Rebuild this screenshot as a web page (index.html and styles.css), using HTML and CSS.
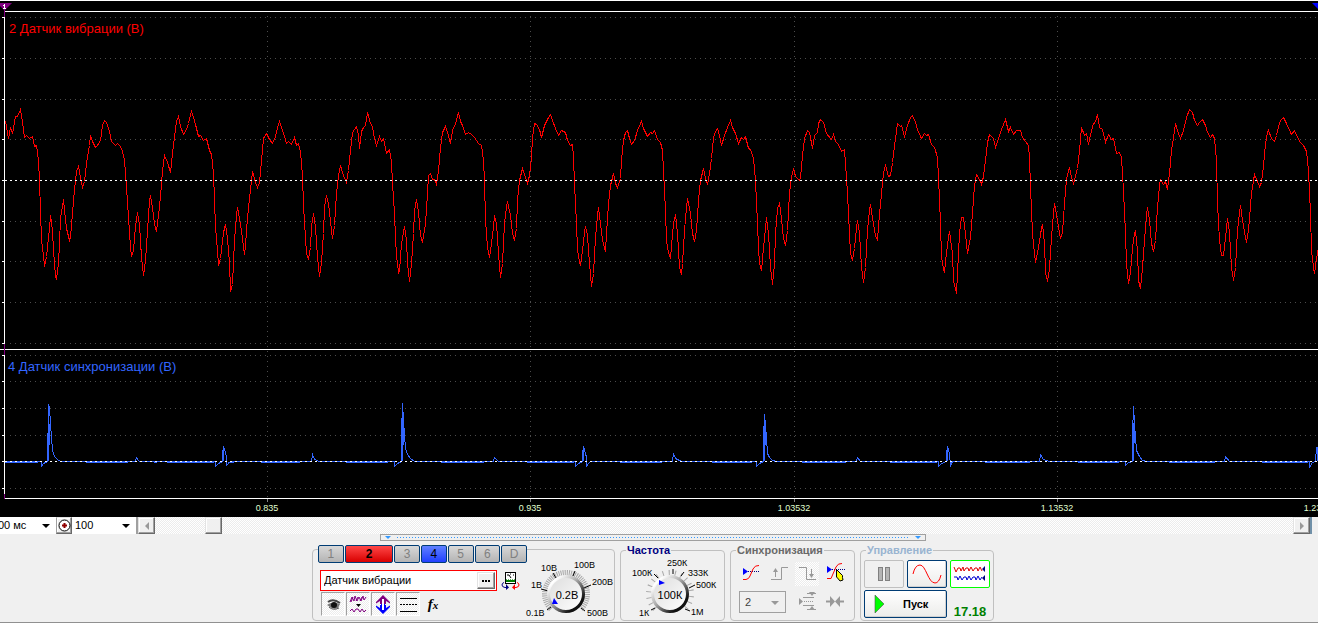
FILE: index.html
```html
<!DOCTYPE html>
<html lang="ru">
<head>
<meta charset="utf-8">
<title>Осциллограф</title>
<link rel="stylesheet" href="styles.css">
</head>
<body>
<main class="scope">
  <svg class="chart" viewBox="0 0 1318 517" role="img" aria-label="Осциллограммы каналов 2 и 4">
    <g class="grid">
      <path d="M10 17.5H1318M10 58.5H1318M10 99.5H1318M10 139.5H1318M10 221.5H1318M10 261.5H1318M10 302.5H1318M10 343.5H1318"/>
      <path d="M10 355.5H1318M10 381.5H1318M10 408.5H1318M10 435.5H1318M10 488.5H1318"/>
      <path d="M267.5 16V348M530.5 16V348M794.5 16V348M1057.5 16V348M267.5 351V498M530.5 351V498M794.5 351V498M1057.5 351V498"/>
    </g>
    <g class="axis">
      <path d="M0 .5H1318M4 11.5H1318M0 349.5H1318M4 498.5H1318M4.5 11V498"/>
      <path d="M2 17.5H5M2 58.5H5M2 99.5H5M2 139.5H5M2 180.5H5M2 221.5H5M2 261.5H5M2 302.5H5M2 343.5H5M2 355.5H5M2 381.5H5M2 408.5H5M2 435.5H5M2 461.5H5M2 488.5H5"/>
    </g>
    <path class="axis-tick" d="M267.5 499V502M530.5 499V502M794.5 499V502M1057.5 499V502"/>
    <path class="marker-line" d="M4.5 10V17M4.5 344V355M4.5 494V499"/>
    <path class="marker" d="M0 3H12L5 10H4L0 6Z"/>
    <path class="marker-digit" d="M3 5.5H5M4.5 4V8M3 8.5H6"/>
    <path class="marker-end" d="M1312 3H1318V9Z"/>

    <polyline class="trace trace-red" transform="translate(.5 .5)" points="5,121 8,138 10,127 12,133 15,116 17,116 20,109 22,122 24,137 26,135 29,138 32,136 34,146 36,145 38,160 39,181 41,240 43,255 44,266 46,256 49,228 50,215 52,230 53,250 55,276 56,279 58,262 59,243 60,218 63,199 64,210 66,228 69,240 70,237 72,213 74,189 76,171 78,166 80,177 82,187 84,181 86,163 89,145 90,135 92,141 95,147 97,145 100,140 102,125 104,120 106,122 109,131 111,141 115,145 117,143 120,146 122,151 124,160 126,187 128,217 130,247 131,256 133,250 135,226 137,212 139,224 141,257 143,275 145,260 147,230 149,200 150,195 152,207 154,224 156,231 158,215 160,196 162,170 164,155 167,162 170,172 172,153 174,137 176,121 178,116 180,126 183,134 186,129 188,123 191,111 193,117 195,124 198,136 200,135 203,140 206,138 209,150 211,154 213,173 215,227 217,250 218,265 220,258 223,232 225,224 227,238 229,262 230,291 232,284 234,240 236,215 237,207 240,224 242,238 244,254 245,245 247,217 250,189 252,171 255,182 257,187 259,182 261,160 263,138 266,133 269,139 272,143 275,136 277,127 279,121 282,130 284,136 286,143 288,141 291,144 294,137 296,145 298,143 300,152 302,175 303,205 305,237 306,253 308,259 310,247 311,226 313,213 315,227 317,257 319,276 321,262 323,233 324,207 326,195 328,203 331,230 332,238 334,225 336,193 338,175 340,165 343,175 346,182 348,170 350,150 352,132 354,129 356,126 358,135 359,148 361,131 363,127 365,125 367,112 370,123 372,126 374,138 376,145 379,136 381,141 383,138 386,153 389,149 391,162 392,183 394,213 395,237 396,255 398,272 399,270 401,243 404,226 406,240 407,263 409,281 411,263 413,233 414,210 416,199 418,212 420,235 422,242 425,223 427,193 428,175 430,173 432,179 434,179 436,184 438,170 440,147 442,132 445,126 447,132 450,143 452,130 455,123 458,112 460,121 462,125 465,134 468,132 471,134 474,137 478,143 481,145 483,160 484,180 485,220 487,247 489,257 490,250 493,227 494,215 496,223 498,253 500,277 502,263 504,223 506,207 507,201 510,215 512,233 514,240 516,228 517,200 519,180 522,168 525,177 527,183 529,175 531,157 532,137 534,123 536,124 539,129 541,137 544,125 547,119 550,114 552,120 555,128 558,135 561,130 565,132 567,140 570,145 572,144 573,157 574,183 576,223 577,250 579,261 580,265 582,250 584,232 585,226 587,235 589,263 591,286 593,273 595,237 597,215 598,207 600,223 602,240 605,251 606,233 608,203 610,185 613,173 615,183 617,187 620,178 621,160 623,140 625,132 627,130 629,138 631,144 634,140 637,130 641,121 643,128 647,136 650,132 652,133 654,130 657,139 660,142 662,150 663,170 665,210 666,240 668,252 670,258 671,245 673,223 675,214 677,233 679,267 681,274 682,263 684,230 686,207 687,198 690,213 692,233 694,241 696,230 698,200 700,180 703,168 705,178 707,184 709,173 711,158 713,137 715,131 717,128 719,135 721,145 724,135 727,127 730,120 732,127 735,133 738,143 741,137 743,139 745,136 748,148 750,149 753,158 755,180 757,223 758,247 759,263 761,270 763,247 765,228 766,217 768,233 770,267 772,284 774,263 775,233 777,208 779,203 781,218 783,238 785,245 787,230 789,193 791,177 793,168 795,176 799,180 800,177 802,155 804,138 807,130 809,132 812,148 814,135 817,132 818,123 820,119 823,122 826,133 831,139 833,134 835,141 838,144 841,151 844,149 845,163 847,193 849,233 850,253 852,260 854,248 856,228 857,220 859,233 861,267 863,282 865,267 867,230 869,210 870,204 872,218 875,235 877,240 878,225 881,193 883,172 885,165 888,176 890,175 892,162 895,138 897,123 900,126 901,125 904,136 907,125 910,117 912,115 915,122 917,129 921,138 924,133 926,135 928,134 931,144 934,147 937,157 938,177 940,223 941,257 943,268 944,272 946,252 948,237 949,231 952,253 953,280 956,293 957,273 959,233 961,217 963,217 965,233 967,253 970,237 972,213 974,185 976,174 979,179 981,184 983,176 985,160 987,142 989,134 993,138 995,147 998,138 1001,129 1005,119 1008,131 1010,127 1013,134 1016,130 1020,130 1022,137 1028,145 1029,157 1030,187 1032,233 1034,253 1035,262 1038,247 1041,228 1042,224 1044,243 1045,272 1047,281 1049,268 1051,237 1053,213 1054,203 1057,220 1060,238 1062,232 1064,203 1066,178 1069,167 1071,177 1073,183 1077,168 1079,150 1081,127 1084,135 1086,133 1088,144 1091,130 1093,123 1095,122 1097,114 1099,127 1102,129 1105,142 1108,134 1111,139 1113,138 1116,153 1119,152 1121,157 1123,190 1125,233 1126,263 1128,283 1130,272 1132,247 1134,233 1135,231 1137,250 1138,280 1140,288 1142,267 1144,240 1146,215 1147,207 1149,220 1151,243 1153,251 1155,240 1157,207 1159,185 1160,179 1163,184 1165,181 1167,189 1169,173 1171,150 1173,137 1175,123 1178,133 1180,138 1183,130 1186,117 1189,109 1192,112 1194,120 1197,125 1199,122 1202,119 1205,125 1207,132 1210,137 1212,134 1214,138 1216,160 1217,203 1219,240 1221,255 1223,255 1225,237 1227,218 1229,232 1231,267 1233,280 1235,267 1237,230 1239,212 1240,205 1242,220 1245,237 1246,242 1248,230 1251,193 1254,174 1257,181 1259,186 1261,182 1263,165 1265,143 1267,132 1268,130 1271,138 1274,141 1276,135 1279,122 1281,119 1283,117 1286,123 1291,134 1294,130 1296,135 1300,142 1303,145 1305,149 1306,151 1308,170 1310,213 1311,250 1313,267 1314,273 1316,258 1318,247"/>

    <polyline class="trace trace-blue" transform="translate(.5 .5)" points="5,461 41,461 41,466 43,463 47,461 47,433 48,433 48,404 49,407 50,424 51,437 52,450 54,456 57,459 60,461 135,461 136,457 138,460 139,461 215,461 215,466 218,463 222,461 222,454 223,446 224,449 226,456 226,465 228,463 230,461 311,461 312,454 314,459 319,461 394,461 394,466 397,463 401,461 401,433 402,403 403,420 404,434 405,448 407,454 410,458 414,461 493,461 494,457 498,461 575,461 575,466 578,463 582,461 582,454 583,446 585,453 586,457 586,466 588,463 590,461 672,461 673,453 675,458 681,461 756,461 756,466 759,463 763,461 763,438 764,414 765,424 766,438 767,453 769,457 772,460 776,461 856,461 857,457 860,461 938,461 938,466 941,463 946,461 946,454 947,446 949,453 950,465 952,461 1039,461 1040,454 1043,459 1049,461 1125,461 1125,465 1128,462 1132,461 1132,434 1133,406 1134,423 1135,437 1136,450 1139,456 1142,460 1146,461 1224,461 1225,456 1229,461 1309,461 1309,467 1312,462 1315,461 1316,447 1318,447"/>
    <path class="trace-thick" d="M48.5 407V461M49.5 424V445M402.5 410V461M403.5 420V445M764.5 420V461M765.5 424V445M1133.5 423V461M1134.5 423V443M223.5 449V461M583.5 449V461M947.5 449V461M1317.5 447V461"/>
    <path class="trace-noise" d="M5 462.5H38M86 462.5H128M154 462.5H157M167 462.5H214M228 462.5H234M261 462.5H300M346 462.5H388M441 462.5H484M527 462.5H574M620 462.5H662M712 462.5H752M802 462.5H846M890 462.5H937M985 462.5H1030M1078 462.5H1119M1169 462.5H1215M1262 462.5H1308"/>
    <path class="zero" d="M5 180.5H1318M5 461.5H1318"/>

    <text class="title title-red" x="9" y="33">2 Датчик вибрации (В)</text>
    <text class="title title-blue" x="8" y="371">4 Датчик синхронизации (В)</text>
    <g class="time">
      <text x="267" y="511">0.835</text>
      <text x="530" y="511">0.935</text>
      <text x="794" y="511">1.03532</text>
      <text x="1057" y="511">1.13532</text>
      <text x="1320" y="511">1.23532</text>
    </g>
  </svg>

  <div class="strip">
    <span class="combo combo-time"><select aria-label="Развёртка"><option>00 мс</option></select></span>
    <button class="bevel zoom" aria-label="Увеличить">
      <svg width="13" height="13" viewBox="0 0 13 13"><circle cx="6.5" cy="6.5" r="5.5" fill="#fff" stroke="#000"/><path d="M6.5 4V9M4 6.5H9" stroke="#900000" stroke-width="2"/></svg>
    </button>
    <span class="combo combo-scale"><select aria-label="Масштаб"><option>100</option></select></span>
    <div class="scroll">
      <button class="bevel" aria-label="Прокрутить влево"><svg width="6" height="8" viewBox="0 0 6 8"><path d="M5 0V8L1 4Z" fill="#999"/></svg></button>
      <button class="bevel thumb" aria-label="Ползунок"></button>
      <button class="bevel right" aria-label="Прокрутить вправо"><svg width="6" height="8" viewBox="0 0 6 8"><path d="M1 0V8L5 4Z" fill="#999"/></svg></button>
    </div>
    <span class="edge"></span>
  </div>

  <section class="panel">
    <div class="splitter"><i></i><span></span><i></i></div>
    <div class="groups">
      <fieldset class="group group-channel" aria-label="Канал">
        <div class="channel">
          <div class="tabs">
            <button>1</button><button class="active-red">2</button><button>3</button><button class="active-blue">4</button><button>5</button><button>6</button><button>D</button>
          </div>
          <div class="name-row">
            <div class="name">
              <input type="text" value="Датчик вибрации" aria-label="Название канала">
              <button class="bevel more" aria-label="Выбрать датчик"><svg width="8" height="2" viewBox="0 0 8 2"><path d="M0 1H2M3 1H5M6 1H8" stroke="#000" stroke-width="2"/></svg></button>
            </div>
            <button class="icon meter" aria-label="Калибровка">
              <svg width="20" height="20" viewBox="0 0 20 20"><rect x="4.5" y="1.5" width="10" height="11" fill="#fff" stroke="#000"/><path d="M5 10H14" stroke="#008000" stroke-width="2"/><path d="M5 8.5H14" stroke="#60b060" stroke-dasharray="1 1"/><path d="M6 4H8M9 3H10M12 4H13M8 4L10 7" stroke="#000" fill="none"/><path d="M3 11.5Q1 12 1 14T4 16.500H7" stroke="#000080" fill="none"/><path d="M5 13L8 16.500 5 19Z" fill="#000080"/><path d="M16 11.500Q18 12 18 14T15 16.500H12" stroke="#f00" fill="none"/><path d="M14 13L11 16.500 14 19Z" fill="#f00"/></svg>
            </button>
          </div>
          <div class="tools">
            <button class="pressed" aria-label="Показать"><svg width="24" height="24" viewBox="0 0 24 24"><path d="M7 10Q12 6 19 11" fill="none" stroke="#444" stroke-width="2"/><path d="M6 13Q11 9 19 12L17 16Q12 18 9 15Z" fill="#777"/><circle cx="13" cy="13" r="3" fill="#111"/><path d="M8 15Q12 19 18 16" fill="none" stroke="#555"/></svg></button>
            <button class="pressed" aria-label="Фильтр"><svg width="24" height="24" viewBox="0 0 24 24"><path d="M4 10L6 5 8 9 9 4 11 9 13 5 15 9 17 4 18 8 20 5" fill="none" stroke="#800080"/><path d="M5 10L7 5M10 9L12 5M14 9L16 5" stroke="#800080"/><path d="M10 12H15L12.500 15Z"/><path d="M4 19L6 17 8 20 10 17 12 17 14 20 16 17 18 20 20 18" fill="none" stroke="#800080"/></svg></button>
            <button class="pressed" aria-label="Подогнать по вертикали"><svg width="24" height="24" viewBox="0 0 24 24"><path d="M12 3L19 10V12H14V13H10V12H5V10Z" fill="#800080"/><path d="M12 22L19 15V13H14V12H10V13H5V15Z" fill="#00f"/><path d="M12 7V18" stroke="#fff" stroke-width="2"/><path d="M5 11.500L9 9V16L5 13.500ZM19 11.500L15 9V16L19 13.500Z" fill="#f0f0f0"/></svg></button>
            <button class="pressed" aria-label="Сетка"><svg width="24" height="24" viewBox="0 0 24 24" stroke="#000"><path d="M4 6.5H21M4 19.5H21"/><path d="M4 12.5H21" stroke-dasharray="2 1"/></svg></button>
            <button class="fx" aria-label="Функция"><em>f</em><small>x</small></button>
          </div>
        </div>
        <label class="dial dial-volt">
          <svg width="86" height="70" viewBox="0 0 86 70">
            <defs>
              <linearGradient id="rim" x1="0" y1="0" x2="1" y2="1"><stop offset=".15" stop-color="#fff"/><stop offset=".45" stop-color="#aaa"/><stop offset=".8" stop-color="#111"/></linearGradient>
              <linearGradient id="face" x1="0" y1="0" x2="1" y2="1"><stop offset="0" stop-color="#dcdcdc"/><stop offset="1" stop-color="#fff"/></linearGradient>
            </defs>
            <path class="scale fine" d="M24.200 58.800A21 21 0 1 1 53.800 58.800"/>
            <path class="marks" d="M24 57L20 60M21 41L14 39M29 28L26 23M46 26L48 21M57 38L64 35M54 58L58 61"/>
            <circle cx="39" cy="44" r="17.500" fill="url(#face)" stroke="url(#rim)" stroke-width="3"/>
            <path d="M27 48L31 54H25Z" fill="#00f"/>
            <g class="ticks"><text x="-1" y="66">0.1В</text><text x="4" y="38">1В</text><text x="14" y="21">10В</text><text x="47" y="18">100В</text><text x="65" y="35">200В</text><text x="60" y="66">500В</text></g>
            <text class="value" x="40" y="49">0.2В</text>
          </svg>
          <input type="range" min="0" max="5" value="0" aria-label="Предел измерения">
        </label>
      </fieldset>

      <fieldset class="group group-rate">
        <legend class="navy">Частота</legend>
        <label class="dial">
          <svg width="103" height="63" viewBox="0 0 103 63">
            <path class="scale coarse" d="M34.200 52.800A21 21 0 1 1 63.800 52.800"/>
            <path class="marks" d="M34 52L30 54M37 22L33 18M52 18V13M60 20L63 16M68 32L74 29M64 53L69 55"/>
            <circle cx="49" cy="38" r="17.500" fill="url(#face)" stroke="url(#rim)" stroke-width="3"/>
            <path d="M38 24L44 27 38 29Z" fill="#00f"/>
            <g class="ticks"><text x="18" y="60">1К</text><text x="11" y="20">100К</text><text x="46" y="10">250К</text><text x="67" y="20">333К</text><text x="75" y="32">500К</text><text x="70" y="59">1М</text></g>
            <text class="value" x="49" y="43">100К</text>
          </svg>
          <input type="range" min="0" max="5" value="1" aria-label="Частота дискретизации">
        </label>
      </fieldset>

      <fieldset class="group group-sync">
        <legend class="gray">Синхронизация</legend>
        <div class="sync">
          <button class="icon" aria-label="Уровень"><svg width="24" height="24" viewBox="0 0 24 24"><path d="M4 6V13L9 9.500Z" fill="#00f"/><path d="M9 9.500H21" stroke="#000080" stroke-dasharray="1 1"/><path d="M4 17.500H7Q10 17 11 14L14 7Q16 3 20 3.500" fill="none" stroke="#f00"/></svg></button>
          <button class="icon" aria-label="По фронту"><svg width="24" height="24" viewBox="0 0 24 24"><path d="M4 17.500H14.500V5.500H21" fill="none" stroke="#999"/><path d="M8.500 15V8" stroke="#999"/><path d="M6 10L8.500 6 11 10Z" fill="#999"/></svg></button>
          <button class="icon hatch" aria-label="По спаду"><svg width="24" height="24" viewBox="0 0 24 24"><path d="M4 5.500H11.500V17.500H21" fill="none" stroke="#999"/><path d="M16.500 7V14" stroke="#999"/><path d="M14 12L16.500 16 19 12Z" fill="#999"/></svg></button>
          <button class="icon" aria-label="Выбрать уровень"><svg width="24" height="24" viewBox="0 0 24 24"><path d="M4 4V11L9 7.500Z" fill="#00f"/><path d="M9 7.500H22" stroke="#000080" stroke-dasharray="1 1"/><path d="M4 16.500H8L13 5Q15 1 19 1.500" fill="none" stroke="#f00"/><path d="M13.500 7.500L19.500 13.500V15.500L20 18 17 19 14.500 16 13.500 15Z" fill="#ff0" stroke="#000"/></svg></button>
          <span class="combo combo-sync"><select aria-label="Канал синхронизации"><option>2</option></select></span>
          <button class="icon" aria-label="Гистерезис"><svg width="24" height="22" viewBox="0 0 24 22"><path d="M8 6.500H19M8 14.500H19M12 2.500H21M12 18.500H21" stroke="#999"/><path d="M4 7V14L8 10.500ZM14 1H20L17 5ZM14 19H20L17 15Z" fill="#999"/><path d="M9 10.500H19" stroke="#999" stroke-dasharray="1 1"/></svg></button>
          <button class="icon" aria-label="К центру"><svg width="24" height="22" viewBox="0 0 24 22"><path d="M3 10.500H8M16 10.500H21" stroke="#999" stroke-width="2"/><path d="M7 5V16L12 10.500ZM17 5V16L12 10.500Z" fill="#999"/></svg></button>
        </div>
      </fieldset>

      <fieldset class="group group-run">
        <legend class="pale">Управление</legend>
        <div class="run">
          <button class="btn btn-off" aria-label="Пауза"><svg width="14" height="16" viewBox="0 0 14 16" fill="#b4b4b4" stroke="#808080"><rect x="1.500" y="1.500" width="4" height="13"/><rect x="8.500" y="1.500" width="4" height="13"/></svg></button>
          <button class="btn" aria-label="Однократно"><svg width="32" height="22" viewBox="0 0 32 22"><path d="M2 11Q4 2 9 2C15 2 17 20 24 20Q28 20 30 12" fill="none" stroke="#f00"/></svg></button>
          <button class="btn btn-on" aria-label="Непрерывно"><svg width="34" height="22" viewBox="0 0 34 22"><path d="M1 4L3 9 5 5H7L8 8 10 4 11 8 13 5H15L16 8 18 4 20 8 22 5H24L25 8 27 4 29 8" fill="none" stroke="#e00000"/><path d="M1 14H4L5 17 7 13 9 17 11 14H13L14 17 16 13 18 17 20 14H22L23 17 25 13 27 17 29 14" fill="none" stroke="#0000d0"/><path d="M32 3V9L29 6ZM32 12V18L29 15Z" fill="#000080"/></svg></button>
          <button class="btn btn-start"><svg width="12" height="20" viewBox="0 0 12 20"><path d="M1 1L10 10 1 19Z" fill="#0f0" stroke="#505050" stroke-opacity=".6"/></svg><b>Пуск</b></button>
          <output class="version">17.18</output>
        </div>
      </fieldset>
    </div>
  </section>
</main>
</body>
</html>
```
FILE: styles.css
```css
* { box-sizing: border-box; }

body {
  margin: 0;
  background: #f0f0f0;
  color: #000;
  font: 11px/13px "Liberation Sans", Arial, sans-serif;
}

button, input, select {
  margin: 0;
  padding: 0;
  border: 0;
  border-radius: 0;
  background: none;
  color: inherit;
  font: inherit;
}

select { appearance: none; }
svg { display: block; flex: none; }

/* chart */
.chart { width: 100%; height: auto; background: #000; }
.grid path { stroke: #4c4c4c; stroke-dasharray: 1 4; shape-rendering: crispEdges; }
.axis path { stroke: #fff; shape-rendering: crispEdges; }
.axis-tick { stroke: #808080; }
.marker-line { stroke: #800080; shape-rendering: crispEdges; }
.marker { fill: #800080; }
.marker-digit { stroke: #fff; }
.marker-end { fill: #00f; }
.trace { fill: none; shape-rendering: crispEdges; }
.trace-red { stroke: #f00; }
.trace-blue { stroke: #36f; }
.trace-thick { stroke: #36f; shape-rendering: crispEdges; }
.trace-noise { stroke: #36f; shape-rendering: crispEdges; }
.zero { stroke: #fff; stroke-dasharray: 2 3; shape-rendering: crispEdges; }
.title { font-size: 13px; }
.title-red { fill: #f00; }
.title-blue { fill: #36f; }
.time { fill: #e0ffd0; font-size: 9px; text-anchor: middle; }

/* strip under the chart */
.strip { display: flex; height: 17px; background: #fff; }

.bevel {
  display: flex;
  align-items: center;
  justify-content: center;
  width: 17px;
  flex: none;
  background: #f0f0f0;
  border: 1px solid;
  border-color: #e3e3e3 #696969 #696969 #e3e3e3;
  box-shadow: inset -1px -1px #a0a0a0, inset 1px 1px #fff;
}

.zoom { width: 16px; border-left-color: #a0a0a0; }

.combo { position: relative; display: flex; flex: none; }
.combo select { width: 100%; }
.combo::after {
  content: "";
  position: absolute;
  right: 6px;
  top: 7px;
  border: 4px solid transparent;
  border-top-color: #000;
  border-bottom: 0;
  pointer-events: none;
}

.combo-time { width: 56px; }
.combo-time select { text-indent: -2px; }
.combo-scale { width: 64px; }
.combo-scale select { padding-left: 3px; }

.scroll, .hatch {
  background: repeating-conic-gradient(#fff 0 25%, #ececec 0 50%) 0 0 / 2px 2px;
}

.scroll { display: flex; flex: 1; border-left: 2px solid #a0a0a0; }
.thumb { margin-left: 50px; }
.right { margin-left: auto; }
.edge { width: 8px; border-left: 2px solid #7090a8; background: #f0f0f0; }

/* control panel */
.panel {
  display: flex;
  flex-direction: column;
  align-items: center;
  padding: 0 12px 1px 0;
  border-bottom: 1px solid #909090;
}

.splitter {
  display: flex;
  align-items: center;
  gap: 6px;
  width: 546px;
  height: 7px;
  padding: 0 4px;
  border: 1px solid #a0a0a0;
}

.splitter span { flex: 1; height: 1px; background: linear-gradient(90deg, #3399ff 1px, transparent 1px) 0 0 / 3px 1px; }
.splitter i { border: 3px solid transparent; border-top-color: #3399ff; border-bottom: 0; }

.groups { display: flex; align-items: flex-end; gap: 5px; padding-top: 3px; }

.group {
  margin: 0;
  padding: 0;
  min-width: 0;
  border: 1px solid #c0c0c0;
  border-radius: 4px;
}

legend { height: 12px; margin-left: 5px; padding: 0 1px; font-weight: bold; line-height: 13px; }
.navy { color: #000080; }
.gray { color: #696969; }
.pale { color: #99b4d1; }

.group-channel { display: flex; height: 72px; width: 303px; }
.group-rate { width: 105px; height: 77px; }
.group-sync { width: 125px; height: 77px; }
.group-run { width: 134px; height: 77px; }

.channel { width: 214px; flex: none; padding-left: 5px; }

.tabs { display: flex; gap: 1px; margin: -5px 0 7px; background: #f0f0f0; }
.tabs button {
  width: 26px;
  height: 18px;
  border: 1px solid #003c74;
  border-radius: 2px;
  background: linear-gradient(#d8d8d8, #b4b4b4);
  color: #808080;
  font-size: 12px;
}
.tabs .active-red { width: 49px; background: linear-gradient(#ff4848, #d80000); color: #000; font-weight: bold; }
.tabs .active-blue { background: linear-gradient(#6080ff, #2040ff); color: #000; }

.name-row { display: flex; gap: 4px; padding-left: 2px; }
.name { display: flex; width: 177px; height: 21px; padding: 1px; border: 1px solid #f00; background: #fff; }
.name input { flex: 1; min-width: 0; padding-left: 2px; }
.more { width: 18px; }

.icon { display: flex; align-items: center; justify-content: center; width: 24px; }
.meter { width: 20px; }

.tools { display: flex; gap: 1px; margin-top: 1px; padding-left: 3px; }
.tools button { width: 24px; height: 24px; }
.pressed {
  border: 1px solid;
  border-color: #a0a0a0 #fff #fff #a0a0a0;
  background: repeating-conic-gradient(#fff 0 25%, #ececec 0 50%) 0 0 / 2px 2px;
}
.pressed svg { margin: -1px; }
.fx { font: italic bold 15px/20px "Liberation Serif", serif; }
.fx small { font-size: 11px; }

/* dials */
.dial { position: relative; display: block; }
.dial svg { overflow: visible; }
.dial input { position: absolute; left: 28px; top: 20px; width: 40px; height: 40px; opacity: 0; }
.scale { fill: none; stroke: #a8a8a8; stroke-width: 6; }
.fine { stroke-dasharray: 1 1; }
.coarse { stroke-dasharray: 1 5; }
.marks { stroke: #000; fill: none; }
.ticks { font-size: 9px; }
.value { font-size: 11px; text-anchor: middle; }

/* sync */
.sync { display: grid; grid-template-columns: repeat(4, 24px); grid-template-rows: 24px 22px; gap: 5px 4px; padding: 6px 0 0 8px; }
.combo-sync { grid-column: span 2; width: 47px; border: 1px solid #a0a0a0; color: #404040; }
.combo-sync select { padding-left: 5px; }
.combo-sync::after { top: 9px; border-top-color: #999; }

/* run */
.run { display: grid; grid-template-columns: repeat(3, 40px); grid-template-rows: 28px 28px; gap: 2px 3px; padding: 4px 0 0 3px; }
.btn {
  display: flex;
  align-items: center;
  justify-content: center;
  border: 1px solid #003c74;
  border-radius: 2px;
  background: linear-gradient(#fff, #ececea);
  box-shadow: inset -1px -1px #d0d0d0;
}
.btn-off { border-color: #c0c0c0; background: #f0f0f0; box-shadow: none; }
.btn-on { border: 1px solid #0f0; background: #fff; box-shadow: none; }
.btn-start { grid-column: span 2; justify-content: flex-start; gap: 17px; padding-left: 9px; }
.version { align-self: end; color: #008000; font-size: 13px; font-weight: bold; text-align: center; }
```
